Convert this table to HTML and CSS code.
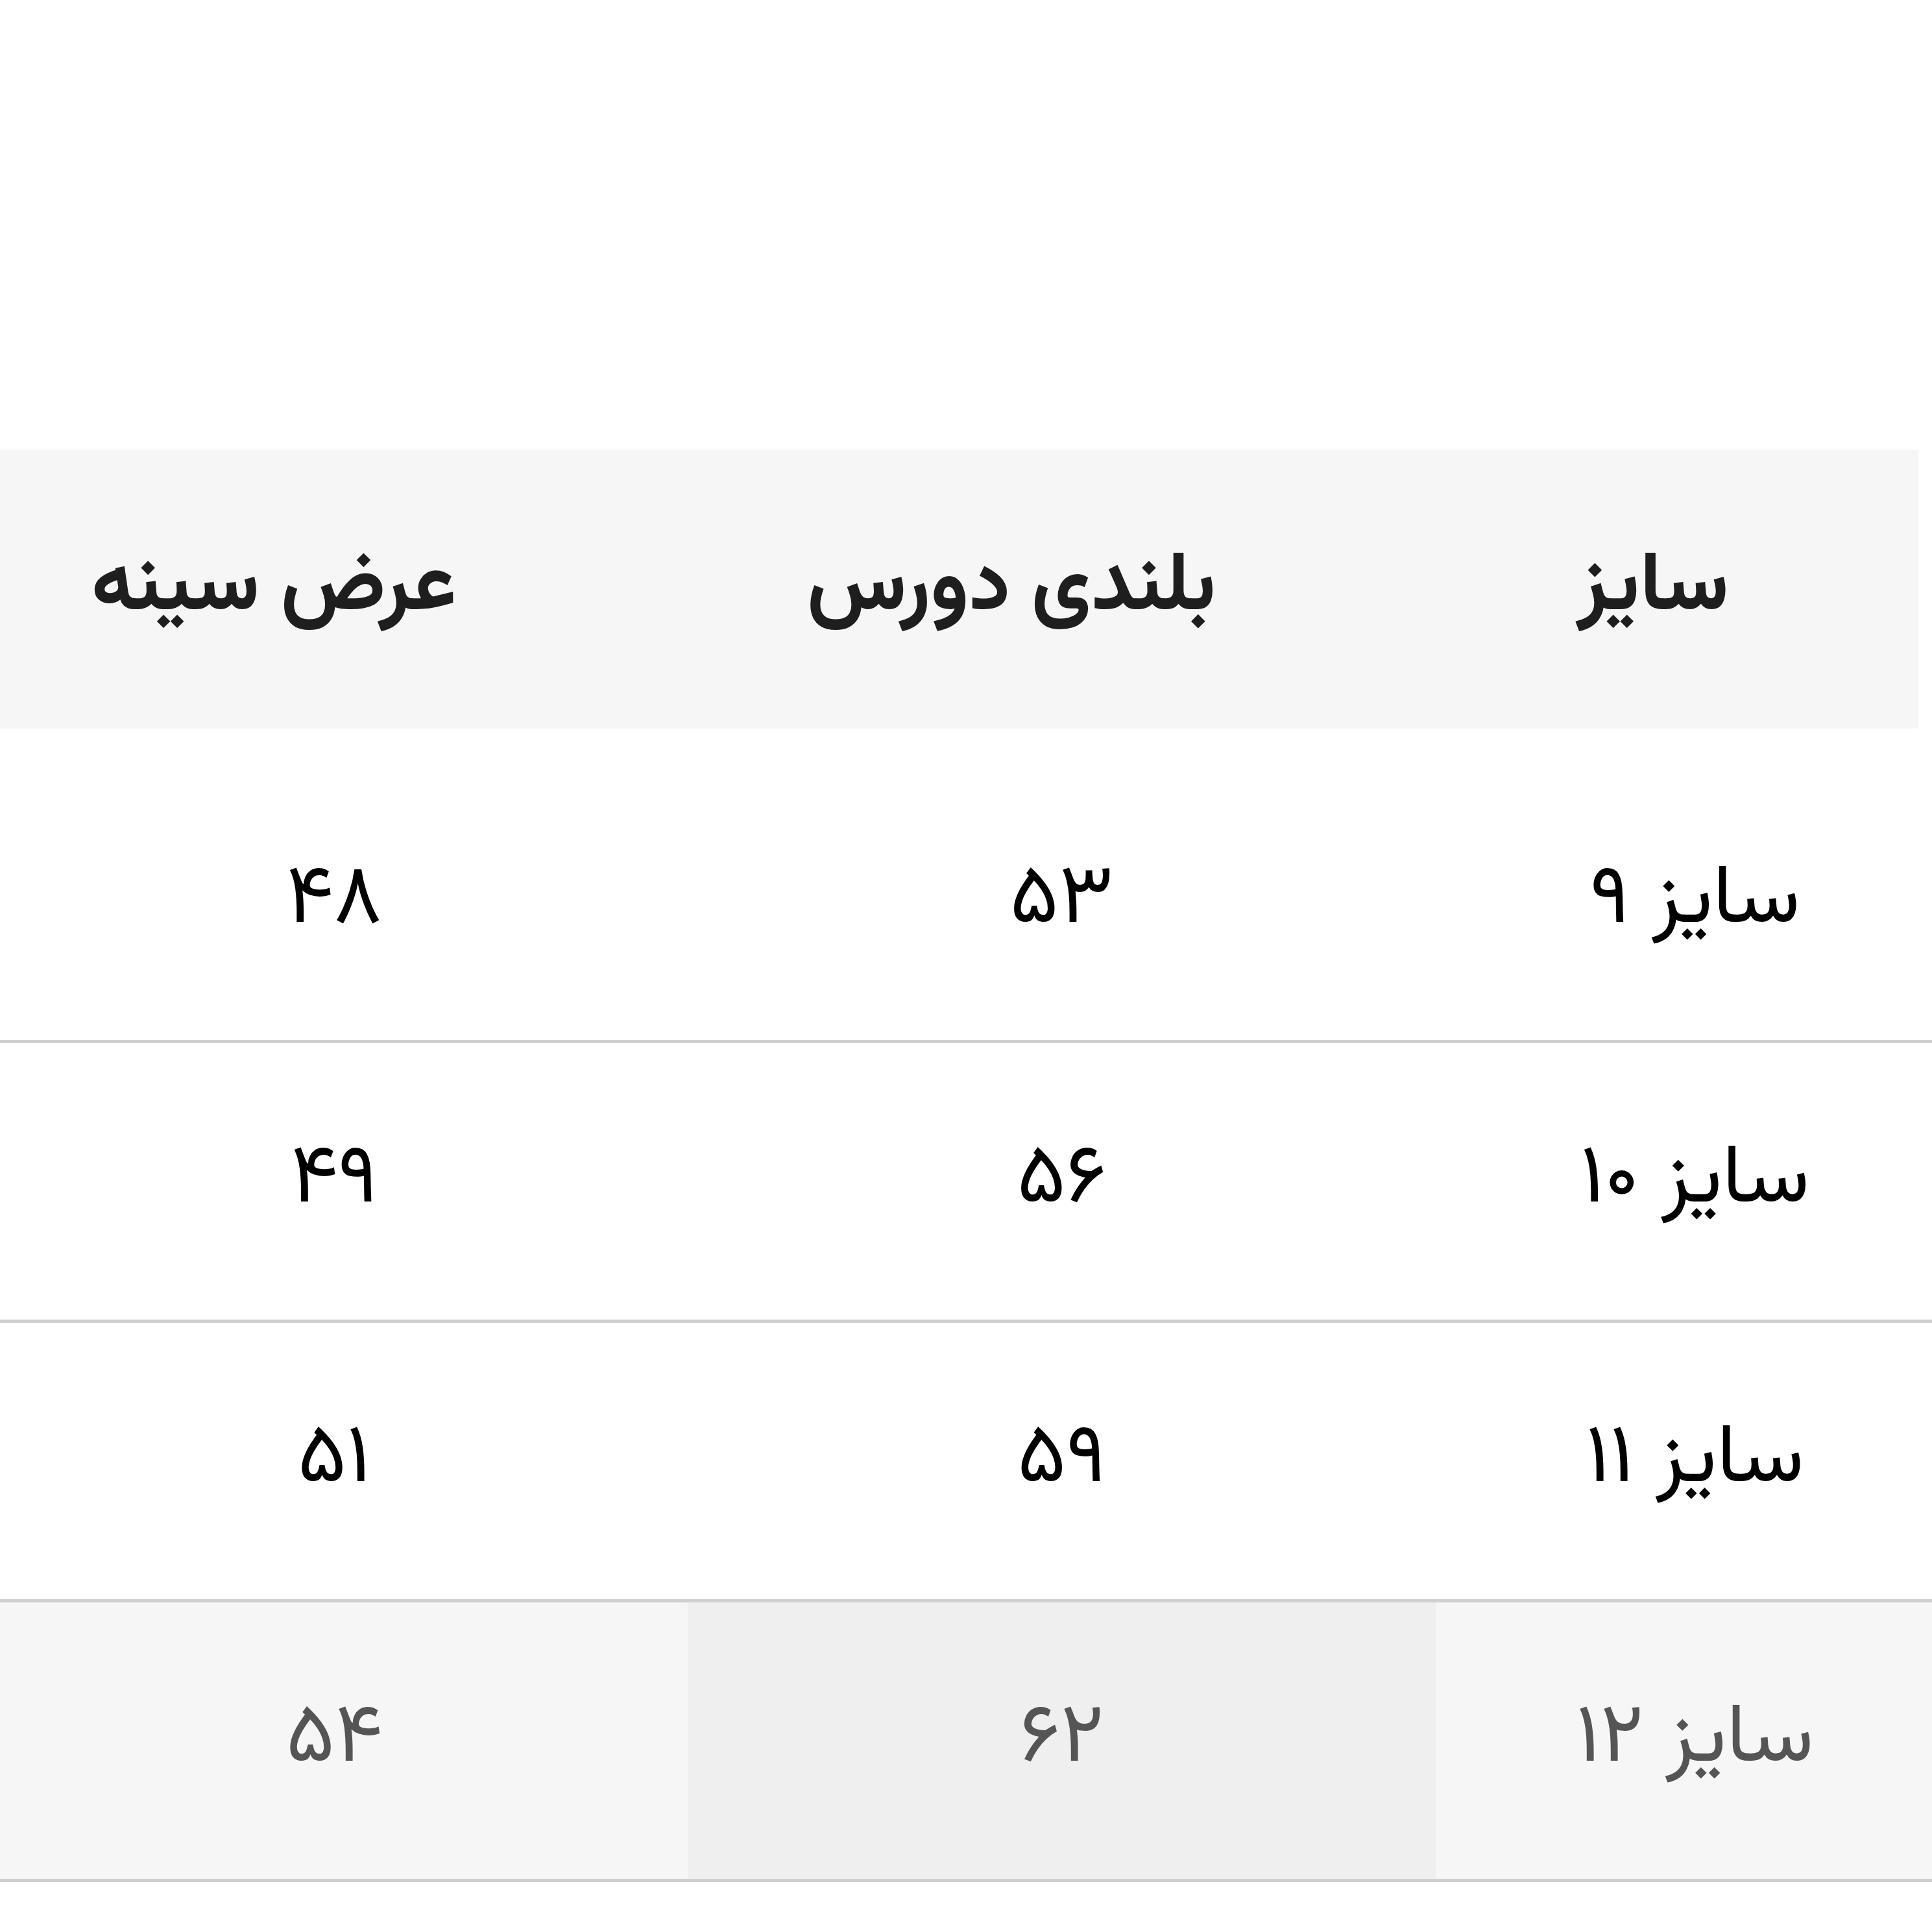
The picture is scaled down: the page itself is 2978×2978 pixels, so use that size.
FILE: index.html
```html
<!DOCTYPE html>
<html lang="fa" dir="rtl">
<head>
<meta charset="utf-8">
<title>جدول سایز</title>
<link rel="stylesheet" href="styles.css">
</head>
<body>
<div class="page">
  <div class="thead">
    <div class="th">سایز</div>
    <div class="th">بلندی دورس</div>
    <div class="th">عرض سینه</div>
  </div>
  <div class="tbody">
    <div class="tr">
      <div class="td td-size">سایز ۹</div>
      <div class="td">۵۳</div>
      <div class="td td-chest">۴۸</div>
    </div>
    <div class="tr">
      <div class="td td-size">سایز ۱۰</div>
      <div class="td">۵۶</div>
      <div class="td td-chest">۴۹</div>
    </div>
    <div class="tr">
      <div class="td td-size">سایز ۱۱</div>
      <div class="td">۵۹</div>
      <div class="td td-chest">۵۱</div>
    </div>
    <div class="tr tr-active">
      <div class="td td-size">سایز ۱۲</div>
      <div class="td td-hover">۶۲</div>
      <div class="td td-chest">۵۴</div>
    </div>
  </div>
</div>
</body>
</html>
```
FILE: styles.css
```css
html, body {
  margin: 0;
  padding: 0;
  background: #ffffff;
}
body {
  font-family: "Vazirmatn", "Vazir", "Noto Sans Arabic", "DejaVu Sans", sans-serif;
  direction: rtl;
}
.page {
  padding-top: 693px;
  width: 2978px;
}
.thead {
  width: 2957px;
  margin-right: 21px;
  box-sizing: border-box;
  height: 430px;
  padding-right: 135px;
  background: #f6f6f6;
  display: grid;
  grid-template-columns: 548px 1430px 844px;
  align-items: center;
}
.th {
  text-align: center;
  font-size: 128px;
  font-weight: bold;
  color: #1e1e1e;
}
.tbody {
  margin-top: 54px;
}
.tr {
  height: 426px;
  border-bottom: 5px solid #cfcfcf;
  display: grid;
  grid-template-columns: 765px 1153px 1060px;
}
.td {
  display: flex;
  align-items: center;
  justify-content: center;
  font-size: 128px;
  color: #000000;
}
.td-size {
  padding-left: 34px;
}
.td-chest {
  padding-right: 30px;
}
.tr-active {
  background: #f6f6f6;
}
.tr-active .td {
  color: #555555;
}
.td-hover {
  background: #efefef;
}
```
